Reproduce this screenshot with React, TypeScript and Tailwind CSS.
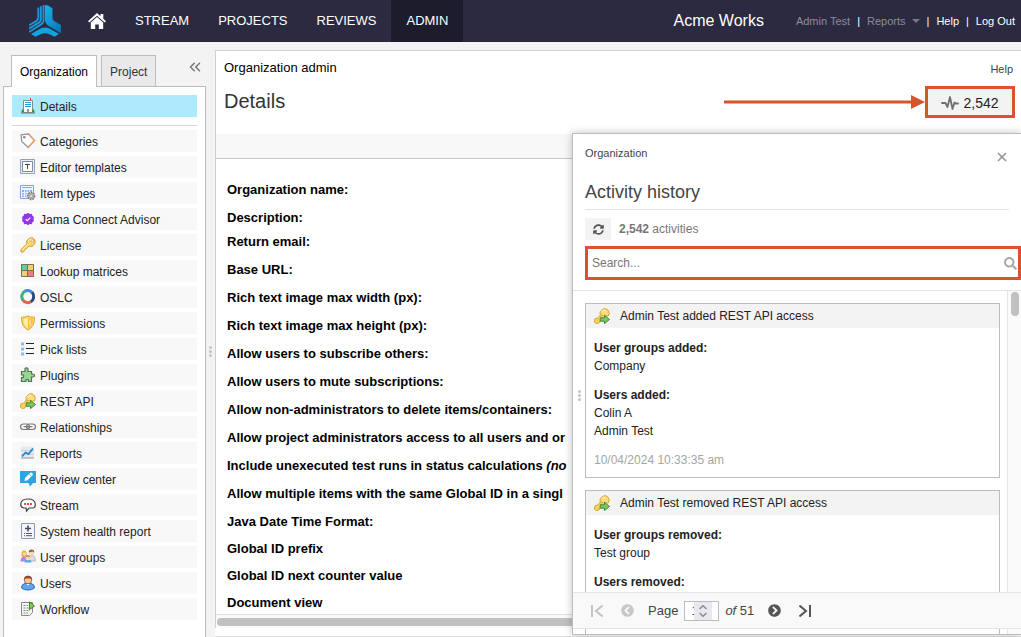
import type { ReactNode } from "react";
import { ChevronsLeft, X } from "lucide-react";
import { FaChevronCircleLeft, FaChevronCircleRight, FaSearch, FaSyncAlt } from "react-icons/fa";

interface IconProps {
  children: ReactNode;
}

interface Activity {
  title: string;
  groups: { heading: string; names: string[] }[];
  date?: string;
}

function Icon({ children }: IconProps) {
  return (
    <svg viewBox="0 0 16 16" className="h-4 w-4 shrink-0" fill="none" aria-hidden="true">
      {children}
    </svg>
  );
}

const KeyArrowIcon = () => (
  <Icon>
    <path d="M9 1.2 11.5.6l2.6 1.6 1.2 3-1 2.8H9.5L6 6.5 6.2 3.8Z" fill="#fbdc7c" stroke="#dca32f" />
    <path d="M7.5 3.5 10 2l1.5 1.5" stroke="#fff3c4" />
    <path d="M6.4 7 3.5 10.2.8 11l-.3 3.3 1.6 1.2 3-.6.6-2.2 2-.6V8.4Z" fill="#fbd35c" stroke="#dca32f" />
    <path d="M6.2 9.8h4.3V7.4l5 4.1-5 4.1v-2.4H6.2Z" fill="#7fc65c" stroke="#3c8a33" />
  </Icon>
);

const LogoIcon = () => (
  <svg viewBox="0 0 32 32" className="h-8 w-8" fill="none" aria-hidden="true">
    <defs>
      <linearGradient id="blade" x1="0" y1="0" x2="1" y2="1">
        <stop offset="0" stopColor="#10b9ec" />
        <stop offset="1" stopColor="#1469b3" />
      </linearGradient>
    </defs>
    <g stroke="#1a96d6" strokeWidth="1.900">
      <path d="M9.300 2.500V12.500q0 2.300-2 3.600L0 20.300" />
      <path d="M11.900 1.200V14q0 2.300-2 3.600L0 23.700" />
      <path d="M14.500 0V15.500q0 2.300-2 3.600L0 27" />
    </g>
    <path d="M16 0 19 .6 23.500 3.200V13q0 2 2 3.200L32 20v8.300L20.500 21.600Q16 19 16 14.500Z" fill="url(#blade)" />
    <path d="M2 29 11.500 23.500Q16 21.300 20.500 23.500L30 29 25.500 31.800 20.500 29.200Q16 27.200 11.500 29.200L6.500 31.800Z" fill="#10a4df" />
  </svg>
);

const HomeIcon = () => (
  <svg viewBox="0 0 18 16" className="h-4 w-[18px]" fill="white" aria-hidden="true">
    <path d="M9 0 0 8.200 1.300 9.500 9 2.700l7.700 6.800L18 8.200 15.300 5.800V1h-2.800v2.200Z" />
    <path d="M9 4 2.800 9.500V16h4.400v-4.500h3.600V16h4.400V9.500Z" />
  </svg>
);

const PulseIcon = () => (
  <svg viewBox="0 0 18 14" className="h-[14px] w-[18px]" fill="none" stroke="#707070" strokeWidth="1.800" strokeLinejoin="round" strokeLinecap="round" aria-hidden="true">
    <path d="M1 7h3.500l2 4L9 1l2.500 12 2-6.500 1 1H17" />
  </svg>
);

const menuItems: { label: string; icon: ReactNode }[] = [
  {
    label: "Categories",
    icon: (
      <Icon>
        <path d="M1 1.800 8.500 1 14.500 7.500 8.200 14.500 1.800 8.500Z" fill="#fff" stroke="#8f8f8f" strokeWidth="1.200" />
        <path d="M9.500 2 14.500 7.500 8.500 14" stroke="#f0a26c" strokeWidth="1.600" />
        <circle cx="4.300" cy="4.300" r="1.300" fill="#888" />
      </Icon>
    ),
  },
  {
    label: "Editor templates",
    icon: (
      <Icon>
        <path d="M.5.5h14v14H.5Z" fill="#e9edf5" stroke="#98a2b3" />
        <path d="M2.500 2.500h10v10h-10Z" fill="#fff" stroke="#7c8db0" />
        <path d="M5 5.500h5M7.500 5.500V10" stroke="#444" />
      </Icon>
    ),
  },
  {
    label: "Item types",
    icon: (
      <Icon>
        <path d="M.5.5h13v13H.5Z" fill="#eef4fd" stroke="#86a5d6" />
        <path d="M2 2.500h10" stroke="#8cc07a" />
        <path d="M2 5h10v7H2Z" fill="#8cb1e6" />
        <path d="M2 7.500h10M2 10h10M4.500 5v7M7 5v7M9.500 5v7" stroke="#e6f0fd" />
        <circle cx="11.200" cy="11" r="3.500" fill="#b4b4b4" stroke="#7d7d7d" strokeDasharray="1.600 1" strokeWidth="1.500" />
        <circle cx="11.200" cy="11" r="1.300" fill="#fff" stroke="#888" strokeWidth=".6" />
      </Icon>
    ),
  },
  {
    label: "Jama Connect Advisor",
    icon: (
      <Icon>
        <path d="m8 1.800 1.700 1.100 2-.1.800 1.900 1.500 1.300-.5 2 .5 2-1.500 1.300-.8 1.900-2-.1L8 14.200l-1.700-1.100-2 .1-.8-1.900L2 10l.5-2L2 6l1.500-1.300.8-1.900 2 .1Z" fill="#9234ea" />
        <path d="m5.700 8.200 1.600 1.500 3-3.100" stroke="#fff" strokeWidth="1.200" />
      </Icon>
    ),
  },
  {
    label: "License",
    icon: (
      <Icon>
        <path d="M9.500 1 12.500.7l2.600 2.500-.2 3.500L12 9.400 9.200 9 4.500 13.300 3.500 15H1V12.500L6.800 6.800 6.700 4Z" fill="#fbd769" stroke="#d59a2c" />
        <path d="m8 4 2-1.700 2-.3M2.500 12.500 8 7.500" stroke="#fff3c0" />
        <circle cx="12.200" cy="4" r="1.300" fill="#fff" stroke="#d59a2c" strokeWidth=".7" />
      </Icon>
    ),
  },
  {
    label: "Lookup matrices",
    icon: (
      <Icon>
        <path d="M1 1h6.500v6.500H1Z" fill="#52d69b" />
        <path d="M7.500 1H14v6.500H7.500ZM1 7.500h6.500V14H1Z" fill="#fccf6a" />
        <path d="M7.500 7.500H14V14H7.500Z" fill="#f47d7d" />
        <path d="M1.500 1.500h12v12h-12ZM7.500 1v13M1 7.500h13" stroke="#77705f" />
      </Icon>
    ),
  },
  {
    label: "OSLC",
    icon: (
      <Icon>
        <g strokeWidth="3">
          <path d="M5 2.100A6.100 6.100 0 0 1 12.600 4.200" stroke="#3d8bea" />
          <path d="M12.200 3.600A6.100 6.100 0 0 1 10.500 13" stroke="#2c4877" />
          <path d="M11 12.800A6.100 6.100 0 0 1 2.600 10.500" stroke="#d9644c" />
          <path d="M2.900 11A6.100 6.100 0 0 1 5.500 1.900" stroke="#36b188" />
        </g>
      </Icon>
    ),
  },
  {
    label: "Permissions",
    icon: (
      <Icon>
        <path d="M8 .8Q6 2.500 1.500 2.200q-.5 9 6.500 13 7-4 6.500-13Q10 2.500 8 .8Z" fill="#fbd55e" stroke="#e0a63a" />
        <path d="M8 2.800Q6.500 4 3.500 4q0 6.500 4.500 9.300Z" fill="#fdebaa" />
        <path d="M8 2.800V13.300Q12.500 10.500 12.500 4 9.500 4 8 2.800Z" fill="#f3bf3c" />
        <path d="M6 4.500v6M10 4.500v6" stroke="#fff4c8" />
      </Icon>
    ),
  },
  {
    label: "Pick lists",
    icon: (
      <Icon>
        <path d="M1 1.500h3v3H1ZM1 6.500h3v3H1ZM1 11.500h3v3H1Z" fill="#8fb8f2" />
        <path d="M6 2.500h8M6 7.500h8M6 12.500h8" stroke="#222" />
      </Icon>
    ),
  },
  {
    label: "Plugins",
    icon: (
      <Icon>
        <path d="M1.500 4.500H5V3Q4.500.8 6.500.8T8 3v1.500h3.500V7h1.300q1.700 0 1.700 1.500T12.800 10h-1.300v4.500H8.300v-2H6v2H1.500V10.500h2v-2.500h-2Z" fill="#98d596" stroke="#557455" strokeWidth="1.200" />
      </Icon>
    ),
  },
  { label: "REST API", icon: <KeyArrowIcon /> },
  {
    label: "Relationships",
    icon: (
      <Icon>
        <rect x=".6" y="5" width="8.800" height="5.500" rx="2.700" stroke="#777" strokeWidth="1.200" />
        <rect x="6.600" y="5" width="8.800" height="5.500" rx="2.700" stroke="#777" strokeWidth="1.200" />
        <path d="M3.500 7.700h9" stroke="#777" strokeWidth="1.200" />
      </Icon>
    ),
  },
  {
    label: "Reports",
    icon: (
      <Icon>
        <path d="M1 1.500h13v12H1Z" fill="#e7e9ec" />
        <path d="M1 5.500h13M1 9.500h13" stroke="#cdd0d5" />
        <path d="M1 13h13" stroke="#999" />
        <path d="m2 11.500 3.500-4 3 1.500L13 3.500" stroke="#2286d0" strokeWidth="1.800" />
      </Icon>
    ),
  },
  {
    label: "Review center",
    icon: (
      <Icon>
        <path d="M0 0h16v12h-3l-3 3.500L8.500 12H0Z" fill="#2aa5e4" />
        <path d="m4.500 10 .5-3L10 2q1-1 2 0l.5.500q.8 1 0 1.800l-5 5Z" fill="#fff" />
        <path d="m9.200 3 2.500 2.500" stroke="#2aa5e4" strokeWidth=".7" />
      </Icon>
    ),
  },
  {
    label: "Stream",
    icon: (
      <Icon>
        <path d="M3.500 11Q.7 10 .7 7.500.7 2 8 2t7.300 5.500Q15.300 11 13 11H9l-2.500 3L6 11Z" fill="#fff" stroke="#444" strokeWidth="1.200" />
        <path d="M4 7h2M7 7h2M10 7h2" stroke="#e0503a" strokeWidth="1.800" />
      </Icon>
    ),
  },
  {
    label: "System health report",
    icon: (
      <Icon>
        <path d="M1.500.5h13v15h-13Z" fill="#f3f5fb" stroke="#8d97bb" />
        <path d="M5 5.500h6M8 2.500v6" stroke="#454c68" strokeWidth="1.600" />
        <path d="M4 10.500h1M6 10.500h6M4 12.700h1M6 12.700h6" stroke="#555" />
      </Icon>
    ),
  },
  {
    label: "User groups",
    icon: (
      <Icon>
        <path d="M.5 12.500Q.5 8 4 7.500t3.500 5Z" fill="#a988dd" />
        <path d="M8.500 11Q9 6 12 6t3.500 6h-4Z" fill="#d7dce8" stroke="#929bb0" strokeWidth=".6" />
        <path d="M1.500 7Q1 1.500 4 1.500T7 7L5.500 8h-3Z" fill="#e9ac3c" />
        <circle cx="4.300" cy="5" r="1.800" fill="#fbd8b5" />
        <circle cx="11.500" cy="3.700" r="2.700" fill="#fbd8b5" />
        <path d="M8.700 3.500Q8.700.5 11.500.5t2.800 3L12.500 2.500Z" fill="#9a603b" />
        <path d="M4.500 13.500q0-3 3.500-3t3.500 3Z" fill="#59a9eb" />
        <circle cx="8" cy="8.800" r="2.500" fill="#fcdab8" />
        <path d="M5.500 8.500Q6 6 8 6t2.500 2.500L8 7.500Z" fill="#c8803b" />
      </Icon>
    ),
  },
  {
    label: "Users",
    icon: (
      <Icon>
        <path d="M1.500 13Q1.500 9 5 8.500h6q3.500.5 3.500 4.500-2.500 2-6.500 2t-6.500-2Z" fill="#5ea5ef" stroke="#2b68be" />
        <circle cx="8" cy="5" r="3.800" fill="#f7c596" stroke="#8d4b28" strokeWidth=".7" />
        <path d="M4 5.500Q3.500.8 8 .8t4 4.700Q11.500 3.500 10 3.500H6Q4.500 3.500 4 5.500Z" fill="#8f4c27" />
        <path d="m6.500 9 1.500 1.600L9.500 9" fill="#fff" />
      </Icon>
    ),
  },
  {
    label: "Workflow",
    icon: (
      <Icon>
        <path d="M1.500 1.500h11v10l-3 3h-8Z" fill="#f4f4f4" stroke="#888" />
        <path d="M3.500 4.500H8M3.500 7H10M3.500 9.500H10M3.500 12H8" stroke="#888" strokeDasharray="2 1" />
        <path d="m9.500.8 5 4.200-5 3.500Z" fill="#83d052" stroke="#397e26" />
      </Icon>
    ),
  },
];

const DetailsIcon = () => (
  <Icon>
    <path d="M3.500 2.500h9v12h-9Z" fill="#fff" stroke="#8b8b8b" />
    <path d="M5 4.500h6M5 6.500h6M5 8.500h6" stroke="#2b9be6" />
    <path d="M7 11h2v3.500H7Z" fill="#999" />
    <path d="m1 14.500 1.800-4 1.700 4ZM11.500 14.500l1.700-4 1.800 4Z" fill="#2f9b3c" />
    <path d="M1 15h14" stroke="#777" />
    <path d="M10.500 0v2" stroke="#e03c2c" />
  </Icon>
);

const fields: { label: string; note?: string; height: string }[] = [
  { label: "Organization name:", height: "h-7" },
  { label: "Description:", height: "h-6" },
  { label: "Return email:", height: "h-7" },
  { label: "Base URL:", height: "h-7" },
  { label: "Rich text image max width (px):", height: "h-7" },
  { label: "Rich text image max height (px):", height: "h-7" },
  { label: "Allow users to subscribe others:", height: "h-7" },
  { label: "Allow users to mute subscriptions:", height: "h-7" },
  { label: "Allow non-administrators to delete items/containers:", height: "h-7" },
  { label: "Allow project administrators access to all users and or", height: "h-7" },
  { label: "Include unexecuted test runs in status calculations", note: "(no", height: "h-7" },
  { label: "Allow multiple items with the same Global ID in a singl", height: "h-7" },
  { label: "Java Date Time Format:", height: "h-[27px]" },
  { label: "Global ID prefix", height: "h-[27px]" },
  { label: "Global ID next counter value", height: "h-[27px]" },
  { label: "Document view", height: "h-5" },
];

const activities: Activity[] = [
  {
    title: "Admin Test added REST API access",
    groups: [
      { heading: "User groups added:", names: ["Company"] },
      { heading: "Users added:", names: ["Colin A", "Admin Test"] },
    ],
    date: "10/04/2024 10:33:35 am",
  },
  {
    title: "Admin Test removed REST API access",
    groups: [
      { heading: "User groups removed:", names: ["Test group"] },
      { heading: "Users removed:", names: [] },
    ],
  },
];

function Grip() {
  return (
    <div className="flex flex-col gap-px">
      <span className="h-[3px] w-[3px] rounded-full bg-[#c4c4c4]" />
      <span className="h-[3px] w-[3px] rounded-full bg-[#c4c4c4]" />
      <span className="h-[3px] w-[3px] rounded-full bg-[#c4c4c4]" />
    </div>
  );
}

function TopBar() {
  return (
    <header className="flex h-[42px] shrink-0 items-center bg-[#2b2a41] pr-[6px] pl-[29px] text-white">
      <a href="#" aria-label="Jama">
        <LogoIcon />
      </a>
      <nav className="ml-[13px] flex h-full items-center gap-px text-[13px] font-medium">
        <a href="#" aria-label="Home" className="px-[14px]">
          <HomeIcon />
        </a>
        <a href="#" className="px-[14px]">STREAM</a>
        <a href="#" className="px-[14px]">PROJECTS</a>
        <a href="#" className="px-[14px]">REVIEWS</a>
        <a href="#" className="flex h-full items-center bg-[#1d1c2c] px-[15px]">ADMIN</a>
      </nav>
      <div className="ml-auto flex items-center text-[11px]">
        <span className="mr-8 text-base">Acme Works</span>
        <div className="flex items-center gap-[7px]">
          <a href="#" className="text-[#8d8c9b]">Admin Test</a>
          <span>|</span>
          <button className="flex items-center gap-[6px] text-[#8d8c9b]">
            Reports
            <svg viewBox="0 0 8 4" className="h-1 w-2" fill="#77768a" aria-hidden="true">
              <path d="M0 0h8L4 4Z" />
            </svg>
          </button>
          <span>|</span>
          <a href="#">Help</a>
          <span>|</span>
          <a href="#">Log Out</a>
        </div>
      </div>
    </header>
  );
}

function Sidebar() {
  return (
    <aside className="flex w-[203px] shrink-0 flex-col pt-[13px] text-xs">
      <div className="flex items-start pl-2">
        <button className="relative z-10 -mb-px h-8 border border-b-0 border-[#bdbdbd] bg-white px-2 text-black">
          Organization
        </button>
        <button className="ml-1 h-[31px] border border-b-0 border-[#bdbdbd] bg-[#e9e9e9] px-2 pt-px text-[#333]">
          Project
        </button>
        <button aria-label="Collapse" className="mt-[3px] mr-[2px] ml-auto text-[#777]">
          <ChevronsLeft size={18} strokeWidth={2} />
        </button>
      </div>
      <div className="flex-1 border border-b-0 border-[#bdbdbd] bg-white px-2 pt-2 text-[#222]">
        <a href="#" className="flex h-[22px] items-center gap-1 bg-[#aeeafd] pl-2">
          <DetailsIcon />
          <span className="pt-px">Details</span>
        </a>
        <hr className="mt-2 mb-1 border-[#d5d5d5]" />
        <ul className="flex flex-col gap-1">
          {menuItems.map((item) => (
            <li key={item.label}>
              <a href="#" className="flex h-[22px] items-center gap-1 bg-[#f8f8f8] pl-2">
                {item.icon}
                <span className="pt-px">{item.label}</span>
              </a>
            </li>
          ))}
        </ul>
      </div>
    </aside>
  );
}

function ActivityPanel() {
  return (
    <section className="absolute top-[91px] right-0 bottom-[2px] flex w-[449px] flex-col border border-r-0 border-[#bdbdbd] bg-white text-xs text-[#222] shadow-[0_0_8px_rgba(0,0,0,0.25)]">
      <div className="pl-3">
        <div className="flex justify-between pt-[11px] pr-3">
          <span className="text-[11px] leading-4 text-[#444]">Organization</span>
          <button aria-label="Close" className="mt-[5px] text-[#999]">
            <X size={14} strokeWidth={3} />
          </button>
        </div>
        <h2 className="mt-4 mr-3 border-b border-[#e2e2e2] pb-[5px] text-lg leading-6 text-[#444]">
          Activity history
        </h2>
        <div className="mt-2 flex items-center gap-2 text-[#777]">
          <button aria-label="Refresh" className="flex h-[22px] w-[26px] items-center justify-center bg-[#f3f3f3] text-[#555]">
            <FaSyncAlt size={11} />
          </button>
          <span>
            <b>2,542</b> activities
          </span>
        </div>
        <div className="mt-[6px] flex h-[34px] items-center border-[3px] border-[#d9532c] pr-px pl-1">
          <input
            type="search"
            aria-label="Search activities"
            placeholder="Search..."
            className="min-w-0 flex-1 outline-none placeholder:text-[#777]"
          />
          <FaSearch size={13} className="text-[#aaa]" />
        </div>
      </div>

      <div className="mt-[10px] flex min-h-0 flex-1 border-t border-[#e2e2e2]">
        <div className="flex w-3 shrink-0 items-start justify-center pt-[99px]">
          <Grip />
        </div>
        <div className="flex min-w-0 flex-1 flex-col gap-3 overflow-hidden pt-3 pr-[7px]">
          {activities.map((activity) => (
            <article key={activity.title} className="min-h-[174px] shrink-0 border border-[#bdbdbd] pb-2">
              <h3 className="flex h-6 items-center gap-[10px] bg-[#f3f3f3] pl-2">
                <KeyArrowIcon />
                {activity.title}
              </h3>
              <div className="flex flex-col gap-[11px] px-2 pt-[11px] leading-[18px]">
                {activity.groups.map((group) => (
                  <div key={group.heading}>
                    <b>{group.heading}</b>
                    {group.names.map((name) => (
                      <div key={name}>{name}</div>
                    ))}
                  </div>
                ))}
                {activity.date && <time className="text-[#a5a5a5]">{activity.date}</time>}
              </div>
            </article>
          ))}
        </div>
        <div className="flex w-[14px] shrink-0 justify-center border-l border-[#e6e6e6] bg-[#fafafa] pt-px">
          <div className="h-6 w-2 rounded-full bg-[#c1c1c1]" />
        </div>
      </div>

      {/* pager floats over the end of the list */}
      <footer className="absolute right-0 bottom-[5px] left-0 flex h-[37px] items-center border-y border-[#e4e4e4] bg-[#f9f9f9] pl-[18px] text-[13px] text-[#444]">
        <button aria-label="First page">
          <svg viewBox="0 0 12 12" className="h-3 w-3" fill="none" stroke="#c4c4c4" strokeWidth="2" aria-hidden="true">
            <path d="M1 0v12M11.500.5 5 6l6.500 5.500" />
          </svg>
        </button>
        <button aria-label="Previous page" className="ml-[18px] text-[#c8c8c8]">
          <FaChevronCircleLeft size={13} />
        </button>
        <label htmlFor="page" className="ml-[14px]">Page</label>
        <div className="ml-[6px] flex h-5 w-[35px] items-center border border-[#bdbdbd] bg-white pl-[6px]">
          <input id="page" type="text" defaultValue="1" className="w-[3px] text-xs outline-none" />
          <button aria-label="Change page" className="flex h-full w-[18px] items-center justify-center bg-[#e9e8ee]">
            <svg viewBox="0 0 8 12" className="h-3 w-2" fill="none" stroke="#8b8a99" strokeWidth="1.500" aria-hidden="true">
              <path d="m.5 4 3.500-3.300L7.500 4M.5 8 4 11.300 7.500 8" />
            </svg>
          </button>
        </div>
        <span className="ml-[6px]">
          <i>of</i> 51
        </span>
        <button aria-label="Next page" className="ml-[14px] text-[#555]">
          <FaChevronCircleRight size={13} />
        </button>
        <button aria-label="Last page" className="ml-[18px]">
          <svg viewBox="0 0 12 12" className="h-3 w-3" fill="none" stroke="#555" strokeWidth="2" aria-hidden="true">
            <path d="M11 0v12M.5.5 7 6 .5 11.500" />
          </svg>
        </button>
      </footer>
    </section>
  );
}

function MainContent() {
  return (
    <main className="flex min-w-0 flex-1 flex-col pt-2">
      <div className="flex min-h-0 flex-1 flex-col border-t border-l border-[#d0d0d0] bg-white">
        <div className="flex justify-between pt-2 pr-2 pl-2">
          <span className="text-[13px] leading-[18px] text-black">Organization admin</span>
          <a href="#" className="text-[11px] leading-5 text-[#444]">Help</a>
        </div>
        <div className="flex items-start pr-[6px] pl-2">
          <h1 className="mt-2 text-xl leading-7 text-[#333]">Details</h1>
          <svg viewBox="0 0 201 16" className="mt-[15px] ml-auto h-4 w-[201px]" fill="#d9532c" aria-hidden="true">
            <path d="M0 6.500h188v3H0ZM187 1l14 7-14 7Z" />
          </svg>
          <button className="mt-[7px] mb-4 flex h-8 w-[90px] items-center justify-center gap-1 border-[3px] border-[#d9532c] bg-[#f3f3f3] pt-px text-sm text-[#222]">
            <PulseIcon />
            2,542
          </button>
        </div>
        <div className="h-[25px] shrink-0 border-b border-[#c8c8c8] bg-[#f8f8f8]" />
        <div className="min-h-0 flex-1 overflow-hidden pt-[23px] pl-[11px]">
          {fields.map((field) => (
            <div key={field.label} className={`${field.height} text-[13px] leading-4 font-bold whitespace-nowrap text-black`}>
              {field.label} {field.note && <i>{field.note}</i>}
            </div>
          ))}
        </div>
        <div className="flex h-[14px] shrink-0 items-center border-t border-[#e2e2e2] bg-[#fafafa] pl-px">
          <div className="h-2 flex-1 rounded-l-full bg-[#c1c1c1]" />
        </div>
      </div>
      <div className="h-[9px] shrink-0 border-b border-[#e2e2e2] bg-white" />
    </main>
  );
}

export default function App() {
  return (
    <div className="flex h-screen flex-col overflow-hidden bg-[#f3f3f3] font-['Liberation_Sans',Arial,sans-serif]">
      <TopBar />
      <div className="relative flex min-h-0 flex-1 pl-[3px]">
        <Sidebar />
        <div className="flex w-[9px] shrink-0 items-center justify-center pt-6">
          <Grip />
        </div>
        <MainContent />
        <ActivityPanel />
      </div>
    </div>
  );
}
